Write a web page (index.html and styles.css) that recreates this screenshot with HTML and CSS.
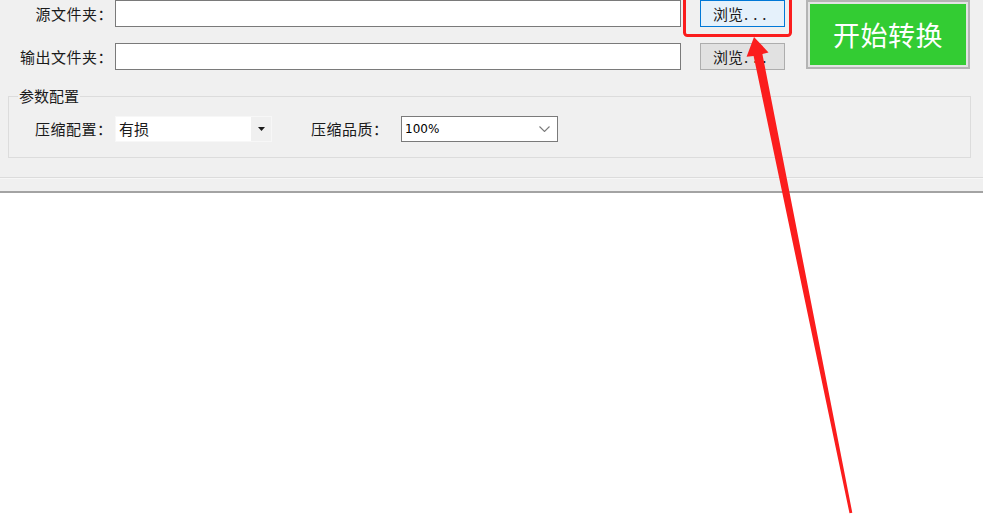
FILE: index.html
```html
<!DOCTYPE html>
<html lang="zh-CN">
<head>
<meta charset="utf-8">
<title>转换</title>
<link rel="stylesheet" href="styles.css">
</head>
<body>
<div class="panel">
  <div class="top">
    <div class="rows">
      <div class="row">
        <span class="lbl">源文件夹：</span>
        <div class="input"></div>
        <button class="btn hover">浏览<span class="dots">...</span></button>
      </div>
      <div class="row">
        <span class="lbl">输出文件夹：</span>
        <div class="input"></div>
        <button class="btn">浏览<span class="dots">...</span></button>
      </div>
    </div>
    <button class="start">开始转换</button>
  </div>
  <fieldset class="group">
    <legend>参数配置</legend>
    <div class="opts">
      <span class="lbl2">压缩配置：</span>
      <div class="combo flat"><span class="val">有损</span><span class="drop"><svg width="7" height="4" viewBox="0 0 7 4"><path d="M0 0h7L3.5 4z" fill="#1a1a1a"/></svg></span></div>
      <span class="lbl2 second">压缩品质：</span>
      <div class="combo boxed"><span class="val num">100%</span><span class="chev"><svg width="11" height="6" viewBox="0 0 11 6"><path d="M0.5 0.5L5.5 5.5L10.5 0.5" fill="none" stroke="#7a7a7a" stroke-width="1.1"/></svg></span></div>
    </div>
  </fieldset>
  <div class="sep"></div>
</div>
<div class="canvas"></div>
<svg class="annot" width="983" height="519" viewBox="0 0 983 519">
  <rect x="684.5" y="-6" width="106" height="41.5" rx="3" ry="3" fill="none" stroke="#fb1d1d" stroke-width="3"/>
  <polygon fill="#fb1d1d" points="754,37 768.5,52.4 762.4,54.1 852.3,512.7 849.5,513.3 753.6,55.9 746.6,56.8"/>
</svg>
</body>
</html>
```

FILE: styles.css
```css
html, body {
  margin: 0;
  padding: 0;
}
body {
  width: 983px;
  height: 519px;
  overflow: hidden;
  background: #ffffff;
  font-family: "Noto Sans CJK SC", "Liberation Sans", sans-serif;
  font-size: 15px;
  color: #1a1a1a;
  position: relative;
}
.panel {
  background: #f0f0f0;
  height: 191px;
  border-bottom: 2px solid #a3a3a3;
  padding: 0 0 0 8px;
  display: flex;
  flex-direction: column;
}
.top {
  display: flex;
  align-items: flex-start;
}
.rows {
  display: flex;
  flex-direction: column;
  gap: 16px;
}
.row {
  display: flex;
  align-items: center;
  height: 27px;
}
.lbl {
  width: 105px;
  text-align: right;
  margin-right: 2px;
  line-height: 20px;
  letter-spacing: 0.5px;
  white-space: nowrap;
}
.input {
  width: 564px;
  height: 25px;
  background: #fff;
  border: 1px solid #7a7a7a;
  margin-right: 19px;
}
.btn {
  width: 85px;
  height: 27px;
  margin: 0;
  padding: 0 0 0 12px;
  text-align: left;
  font-family: inherit;
  font-size: 15px;
  line-height: 20px;
  color: #1a1a1a;
  background: #e1e1e1;
  border: 1px solid #adadad;
  box-sizing: border-box;
  white-space: nowrap;
}
.btn.hover {
  background: #e5f1fb;
  border-color: #0078d7;
}
.dots {
  letter-spacing: 5px;
  margin-left: 1px;
}
.start {
  margin: 0 0 0 21px;
  width: 164px;
  height: 69px;
  box-sizing: border-box;
  border: 2px solid #b4b4b4;
  padding: 0;
  background: #33cc33;
  box-shadow: inset 0 0 0 2px #e3e3e3;
  color: #ffffff;
  font-family: "Noto Sans CJK SC", sans-serif;
  font-size: 27px;
  font-weight: 400;
  line-height: 36px;
  letter-spacing: 0.5px;
}
.group {
  margin: 16px 0 0 0;
  width: 961px;
  border: 1px solid #dcdcdc;
  padding: 10px 0 15px 0;
  min-width: 0;
  box-sizing: content-box;
}
.group legend {
  margin-left: 9px;
  padding: 0 1px;
  line-height: 20px;
  font-size: 15px;
}
.opts {
  display: flex;
  align-items: center;
  height: 26px;
  padding-left: 26px;
}
.lbl2 {
  width: 78px;
  margin-right: 2px;
  line-height: 20px;
  letter-spacing: 0.5px;
  white-space: nowrap;
}
.lbl2.second {
  margin-left: 39px;
  width: 90px;
  margin-right: 0;
}
.combo {
  height: 26px;
  width: 157px;
  display: flex;
  align-items: center;
  background: #fff;
  box-sizing: border-box;
}
.combo .val {
  flex: 1;
  line-height: 20px;
  padding-left: 3px;
}
.combo.flat {
  border: 1px solid #f7f7f7;
}
.combo .drop {
  width: 20px;
  height: 24px;
  background: #f0f0f0;
  display: flex;
  align-items: center;
  justify-content: center;
}
.combo.boxed {
  border: 1px solid #7a7a7a;
}
.combo .num {
  font-family: "DejaVu Sans", "Liberation Sans", sans-serif;
  font-size: 12px;
  padding-left: 3px;
  color: #000;
}
.combo .chev {
  width: 22px;
  display: flex;
  align-items: center;
  justify-content: center;
  padding-right: 2px;
}
.sep {
  margin: 19px 0 0 -8px;
  height: 1px;
  background: #dcdcdc;
  border-bottom: 1px solid #f7f7f7;
}
.canvas {
  height: 326px;
  background: #ffffff;
}
.annot {
  position: absolute;
  left: 0;
  top: 0;
  pointer-events: none;
}
```
